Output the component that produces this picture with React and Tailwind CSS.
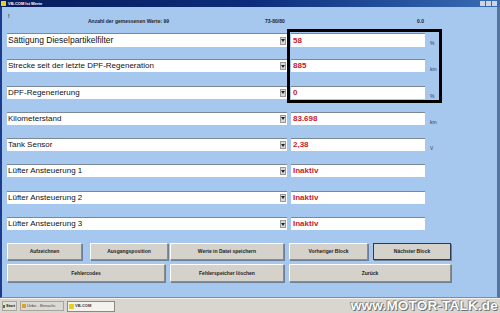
import React from 'react';

const rows = [
  { label: 'Sättigung Dieselpartikelfilter', value: '58', unit: '%', big: true },
  { label: 'Strecke seit der letzte DPF-Regeneration', value: '885', unit: 'km' },
  { label: 'DPF-Regenerierung', value: '0', unit: '%' },
  { label: 'Kilometerstand', value: '83.698', unit: 'km' },
  { label: 'Tank Sensor', value: '2,38', unit: 'V' },
  { label: 'Lüfter Ansteuerung 1', value: 'Inaktiv', unit: '' },
  { label: 'Lüfter Ansteuerung 2', value: 'Inaktiv', unit: '' },
  { label: 'Lüfter Ansteuerung 3', value: 'Inaktiv', unit: '' },
];

function DropArrow() {
  return (
    <div className="ml-auto mr-[1px] w-[6px] h-[8px] bg-[#d8d8d8] border border-[#9a9a9a] flex items-center justify-center">
      <svg width="4" height="3" viewBox="0 0 4 3">
        <path d="M0 0 L4 0 L2 3 Z" fill="#222" />
      </svg>
    </div>
  );
}

function ValueRow({ row }) {
  const h = row.big ? 'h-[14px]' : 'h-[13px]';
  return (
    <div className="h-[26.3px] flex items-start">
      <div className={`w-[280px] ${h} bg-white border-t border-[#7d8896] flex items-center`}>
        <span className={`pl-[1px] text-[#111] leading-none ${row.big ? 'text-[8.5px]' : 'text-[8px]'}`}>{row.label}</span>
        <DropArrow />
      </div>
      <div className={`ml-[4px] w-[134px] ${h} bg-white border-t border-[#7d8896] flex items-center`}>
        <span className="pl-[2px] text-[8px] font-bold text-[#c8202a] leading-none">{row.value}</span>
      </div>
      <span className="ml-[5px] mt-[8px] text-[5px] text-[#2d3f58] leading-none">{row.unit}</span>
    </div>
  );
}

function Btn({ children, className = '', active }) {
  return (
    <button
      className={`h-full bg-[#d5d2cb] text-[5px] font-bold text-[#222] flex items-center justify-center shadow-[1px_1px_0_#6f7f93] ${
        active ? 'border border-[#2e3b4c]' : 'border border-t-white border-l-white border-r-[#8e8c86] border-b-[#8e8c86]'
      } ${className}`}
    >
      {children}
    </button>
  );
}

export default function App() {
  return (
    <div className="w-[500px] h-[313px] flex flex-col overflow-hidden relative bg-[#a6c8ee] font-['Liberation_Sans',Arial,sans-serif]">
      {/* title bar */}
      <div className="h-[7px] flex items-center bg-gradient-to-r from-[#081d5c] via-[#0c2c7a] to-[#3a6cb6]">
        <div className="ml-[1px] w-[5px] h-[5px] bg-[#e6d21c]" />
        <span className="ml-[2px] text-[4px] font-bold text-white leading-none">VB-COM Ist Werte</span>
        <div className="ml-auto mr-[3px] flex gap-[1px]">
          <div className="w-[5px] h-[5px] bg-[#cfd6e0]" />
          <div className="w-[5px] h-[5px] bg-[#cfd6e0]" />
          <div className="w-[5px] h-[5px] bg-[#cfd6e0]" />
        </div>
      </div>

      {/* window body */}
      <div className="flex-1 flex border-l-2 border-l-[#1b3c8f] border-r-[3px] border-r-[#55779f] border-b border-b-[#6f8fb8]">
        <div className="flex-1 pl-[5px] flex flex-col">
          {/* header */}
          <div className="h-[26px] relative">
            <span className="absolute left-[1px] top-[7px] text-[5px] font-bold text-[#333] leading-none">!</span>
            <div className="pt-[12px] flex items-center text-[5px] font-bold text-[#1d2530] leading-none">
              <span className="ml-[81px] w-[177px]">Anzahl der gemessenen Werte: 99</span>
              <span className="w-[152px]">73-80/80</span>
              <span>0.0</span>
            </div>
          </div>

          {/* rows */}
          <div className="relative">
            {rows.map((r) => (
              <ValueRow key={r.label} row={r} />
            ))}
            <div className="absolute left-[280px] top-[-4px] w-[155px] h-[74px] border-[3px] border-black pointer-events-none" />
          </div>

          {/* buttons */}
          <div className="grid grid-cols-[75px_78px_114px_79px_78px] grid-rows-[17px_18px] gap-x-[5px] gap-y-[4px]">
            <Btn>Aufzeichnen</Btn>
            <Btn className="ml-[3px] w-[78px]">Ausgangsposition</Btn>
            <Btn>Werte in Datei speichern</Btn>
            <Btn>Vorheriger Block</Btn>
            <Btn active>Nächster Block</Btn>
            <Btn className="col-span-2">Fehlercodes</Btn>
            <Btn>Fehlerspeicher löschen</Btn>
            <Btn className="col-span-2">Zurück</Btn>
          </div>
        </div>
      </div>

      {/* taskbar */}
      <div className="h-[15px] bg-[#d9d6cf] border-t border-t-[#f2f0ea] flex items-center gap-[3px] pl-[2px]">
        <div className="h-[10px] w-[15px] flex items-center gap-[1px] border border-[#a9a59c] bg-[#e2dfd8]">
          <div className="w-[2px] h-[3px] bg-[#2a8f2a]" />
          <span className="text-[4px] font-bold text-[#222] leading-none">Start</span>
        </div>
        <div className="h-[10px] w-[44px] flex items-center gap-[1px] border border-[#a9a59c] bg-[#dcd9d2] px-[1px]">
          <div className="w-[4px] h-[4px] bg-[#d9a232]" />
          <span className="text-[4px] text-[#444] leading-none whitespace-nowrap">Unbe - Benachr.</span>
        </div>
        <div className="h-[11px] w-[48px] flex items-center gap-[1px] border border-[#8d897f] bg-[#f4f2ec] px-[1px]">
          <div className="w-[5px] h-[5px] bg-[#e6d21c]" />
          <span className="text-[4px] font-bold text-[#333] leading-none">VB-COM</span>
        </div>
      </div>

      {/* watermark */}
      <span className="absolute right-[2px] bottom-[1px] text-[13.5px] font-bold text-white leading-none tracking-[0.2px] [text-shadow:0_0_1px_#555,1px_1px_0_#777,-1px_-1px_0_#999]">
        www.MOTOR-TALK.de
      </span>
    </div>
  );
}
